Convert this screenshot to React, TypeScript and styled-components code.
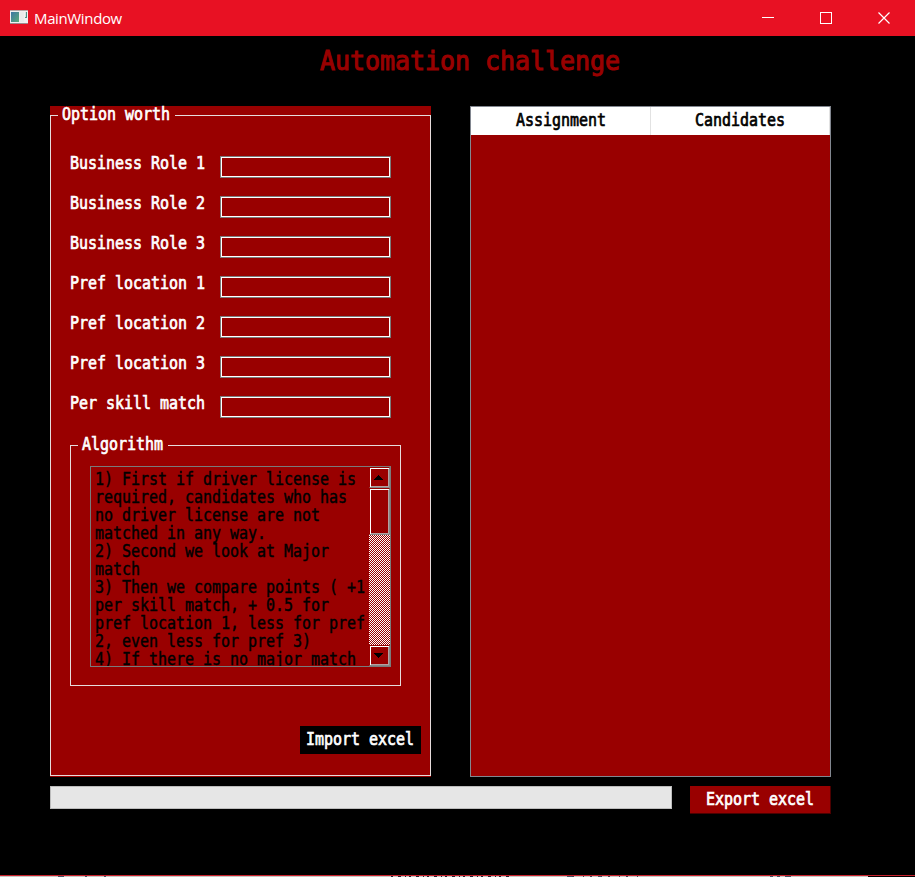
import React from "react";
import styled, { createGlobalStyle, css } from "styled-components";

const RED = "#990000";

const GlobalStyle = createGlobalStyle`
  * { box-sizing: border-box; }
  body { margin: 0; background: #000; overflow: hidden; }
`;

const mono = css`
  font-family: "DejaVu Sans Mono", "Liberation Mono", monospace;
  font-size: 15px;
  line-height: 18px;
  letter-spacing: -0.03px;
  white-space: pre;
`;

const Text = styled.span<{ $color?: string; $stroke?: number }>`
  ${mono}
  display: block;
  color: ${(p) => p.$color ?? "#fff"};
  -webkit-text-stroke: ${(p) => p.$stroke ?? 0.6}px currentColor;
  transform: scaleY(1.15);
  transform-origin: 0 14px;
`;

const Window = styled.div`
  display: flex;
  flex-direction: column;
  width: 915px;
  height: 877px;
  background: #000;
`;

const TitleBar = styled.header`
  display: flex;
  align-items: center;
  height: 36px;
  flex: none;
  padding-left: 10px;
  background: #e81123;
`;

const WindowTitle = styled.span`
  flex: 1;
  margin-left: 6px;
  color: #fff;
  font: 15px/20px "Open Sans", "Noto Sans", sans-serif;
  letter-spacing: -0.36px;
`;

const CaptionButton = styled.button`
  width: 58px;
  height: 36px;
  padding: 0;
  border: 0;
  background: none;
  svg { display: block; margin: 0 auto; }
`;

const Controls = styled.div`
  display: flex;
  margin: -1px 2px 0 0;
`;

const Heading = styled.h1`
  ${mono}
  flex: none;
  height: 70px;
  margin: 0;
  padding: 10px 0 0 320px;
  font-size: 25px;
  font-weight: 400;
  line-height: 32px;
  letter-spacing: -0.05px;
  color: ${RED};
  -webkit-text-stroke: 1px ${RED};
  transform: scaleY(1.08);
  transform-origin: 0 34px;
`;

const Panels = styled.main`
  display: flex;
  gap: 39px;
  height: 671px;
  flex: none;
  padding-left: 50px;
`;

const OptionPanel = styled.section`
  width: 381px;
  padding: 9px 0 1px;
  background: ${RED};
`;

const Frame = styled.div<{ $tint: string }>`
  height: 100%;
  border: 1px solid ${(p) => p.$tint};
`;

const Legend = styled.div<{ $gap: number }>`
  width: ${(p) => p.$gap}px;
  height: 18px;
  margin: -10px 0 0 7px;
  padding-left: 4px;
  background: ${RED};
`;

const Fields = styled.div`
  display: grid;
  grid-auto-rows: 40px;
  padding: 31px 0 0 19px;
`;

const Field = styled.label`
  display: grid;
  grid-template-columns: 150px 171px;
  align-items: start;
`;

const Input = styled.input`
  ${mono}
  width: 171px;
  height: 22px;
  margin-top: 1px;
  padding: 0 4px;
  border: 1px solid #7a7a7a;
  border-radius: 0;
  outline: 1px solid #fff;
  outline-offset: -2px;
  background: ${RED};
  color: #fff;
`;

const AlgorithmBox = styled.div`
  width: 331px;
  height: 241px;
  margin: 10px 0 0 19px;
`;

const TextArea = styled.div`
  display: flex;
  justify-content: space-between;
  width: 301px;
  height: 201px;
  margin: 12px 0 0 19px;
  border: 1px solid #7a7a7a;
  overflow: hidden;
`;

const Lines = styled.div`
  padding: 4px 0 0 4px;
  width: 278px;
  height: 199px;
  overflow: hidden;
`;

const ScrollBar = styled.div`
  display: flex;
  flex-direction: column;
  width: 21px;
  height: 199px;
  flex: none;
`;

const Bevel = styled.div<{ $h: number }>`
  display: flex;
  align-items: center;
  justify-content: center;
  height: ${(p) => p.$h}px;
  flex: none;
  padding-right: 2px;
  border: 1px solid;
  border-color: ${RED} #868686 #868686 ${RED};
  box-shadow: inset 1px 1px #fff, inset -1px -1px #b5a0a0;
  background: ${RED};
`;

const Track = styled.div`
  flex: 1;
  overflow: hidden;
  background: ${RED};
  svg { display: block; }
`;

const Button = styled.button<{ $w: number; $h: number; $bg: string; $left: number }>`
  display: flex;
  width: ${(p) => p.$w}px;
  height: ${(p) => p.$h}px;
  padding: 5px 0 0 ${(p) => p.$left}px;
  border: 0;
  background: ${(p) => p.$bg};
`;

const ImportRow = styled.div`
  display: flex;
  justify-content: flex-end;
  padding: 40px 9px 0 0;
`;

const ResultTable = styled.section`
  width: 361px;
  border: 1px solid #828790;
  background: ${RED};
`;

const TableHead = styled.div`
  display: grid;
  grid-template-columns: 180px 179px;
  height: 28px;
  background: #fff;
`;

const HeadCell = styled.div<{ $left: number }>`
  padding: 5px 0 0 ${(p) => p.$left}px;
  border-right: 1px solid #e2e2e2;
`;

const Footer = styled.footer`
  display: flex;
  gap: 18px;
  height: 98px;
  padding: 9px 0 0 50px;
`;

const Progress = styled.div`
  width: 622px;
  height: 23px;
  border: 1px solid #bcbcbc;
  background: #e6e6e6;
`;

const ExportShadow = styled.div`
  width: 141px;
  height: 28px;
  border: solid #4c0000;
  border-width: 0 1px 1px 0;
`;

const BottomEdge = styled.div`
  height: 2px;
  flex: none;
  border-top: 1px solid #c8202c;
  background: linear-gradient(90deg, #c6c6c2 868px, #000 868px);
  svg { display: block; }
`;

const FIELDS = [
  "Business Role 1", "Business Role 2", "Business Role 3",
  "Pref location 1", "Pref location 2", "Pref location 3",
  "Per skill match",
];

const ALGORITHM = [
  "1) First if driver license is",
  "required, candidates who has",
  "no driver license are not",
  "matched in any way.",
  "2) Second we look at Major",
  "match",
  "3) Then we compare points ( +1",
  "per skill match, + 0.5 for",
  "pref location 1, less for pref",
  "2, even less for pref 3)",
  "4) If there is no major match",
];

const AppIcon = () => (
  <svg width="18" height="16" viewBox="0 0 18 16">
    <defs>
      <linearGradient id="screen" x1="0" y1="0" x2="1" y2="1">
        <stop offset="0" stopColor="#3d75a4" />
        <stop offset="1" stopColor="#5aab78" />
      </linearGradient>
    </defs>
    <rect y="0" width="18" height="14" fill="#f1f0f1" />
    <rect y="0" width="18" height="1" fill="#b7a6a6" />
    <rect y="13" width="18" height="1" fill="#9b8b8d" />
    <rect x="1" y="2" width="8" height="10" fill="url(#screen)" />
    <rect x="10" y="2" width="4" height="10" fill="#e9ebeb" />
    <rect x="15" y="2" width="2" height="6" fill="#4c8f83" />
    <rect x="15" y="2" width="1" height="5" fill="#d5e3e1" />
  </svg>
);

const Arrow = ({ down = false }: { down?: boolean }) => (
  <svg width="9" height="5" viewBox="0 0 9 5" shapeRendering="crispEdges">
    <path d={down ? "M0 0H9V1H8V2H7V3H6V4H5V5H4V4H3V3H2V2H1V1H0Z" : "M0 5H9V4H8V3H7V2H6V1H5V0H4V1H3V2H2V3H1V4H0Z"} />
  </svg>
);

const Dither = () => (
  <svg width="21" height="120" shapeRendering="crispEdges">
    <defs>
      <pattern id="dither" width="2" height="2" patternUnits="userSpaceOnUse">
        <rect width="1" height="1" fill="#fff" />
        <rect x="1" y="1" width="1" height="1" fill="#fff" />
      </pattern>
    </defs>
    <rect width="21" height="120" fill="url(#dither)" />
  </svg>
);

export default function App() {
  return (
    <Window>
      <GlobalStyle />
      <TitleBar>
        <AppIcon />
        <WindowTitle>MainWindow</WindowTitle>
        <Controls>
          <CaptionButton aria-label="Minimize">
            <svg width="12" height="12"><path d="M0 5.5H12" stroke="#fff" /></svg>
          </CaptionButton>
          <CaptionButton aria-label="Maximize">
            <svg width="12" height="12"><rect x=".5" y=".5" width="11" height="11" fill="none" stroke="#fff" /></svg>
          </CaptionButton>
          <CaptionButton aria-label="Close">
            <svg width="12" height="12"><path d="M.5 .5L11.5 11.5M11.5 .5L.5 11.5" stroke="#fff" strokeWidth="1.2" /></svg>
          </CaptionButton>
        </Controls>
      </TitleBar>
      <Heading>Automation challenge</Heading>
      <Panels>
        <OptionPanel>
          <Frame $tint="#e6dcdc">
            <Legend $gap={117}><Text>Option worth</Text></Legend>
            <Fields>
              {FIELDS.map((name) => (
                <Field key={name}>
                  <Text>{name}</Text>
                  <Input />
                </Field>
              ))}
            </Fields>
            <AlgorithmBox>
              <Frame $tint="#e6dcdc">
                <Legend $gap={90}><Text>Algorithm</Text></Legend>
                <TextArea>
                  <Lines>
                    {ALGORITHM.map((line) => (
                      <Text key={line} $color="#000" $stroke={0.4}>{line}</Text>
                    ))}
                  </Lines>
                  <ScrollBar>
                    <Bevel $h={21}><Arrow /></Bevel>
                    <Bevel $h={47} />
                    <Track><Dither /></Track>
                    <Bevel $h={21}><Arrow down /></Bevel>
                  </ScrollBar>
                </TextArea>
              </Frame>
            </AlgorithmBox>
            <ImportRow>
              <Button $w={121} $h={28} $bg="#000" $left={6}><Text>Import excel</Text></Button>
            </ImportRow>
          </Frame>
        </OptionPanel>
        <ResultTable>
          <TableHead>
            <HeadCell $left={45}><Text $color="#000">Assignment</Text></HeadCell>
            <HeadCell $left={44}><Text $color="#000">Candidates</Text></HeadCell>
          </TableHead>
        </ResultTable>
      </Panels>
      <Footer>
        <Progress />
        <ExportShadow>
          <Button $w={140} $h={27} $bg={RED} $left={16}><Text>Export excel</Text></Button>
        </ExportShadow>
      </Footer>
      <BottomEdge>
        <svg width="915" height="1">
          <path d="M58 .5H64M85 .5H87M104 .5H106M567 .5H572M598 .5H602M770 .5H773M777 .5H780M785 .5H791" stroke="#456" />
          <path d="M391 .5H512" stroke="#223" strokeDasharray="2 5 3 4 1 3" />
          <path d="M572 .5H640" stroke="#445" strokeDasharray="2 9 1 6" />
        </svg>
      </BottomEdge>
    </Window>
  );
}
